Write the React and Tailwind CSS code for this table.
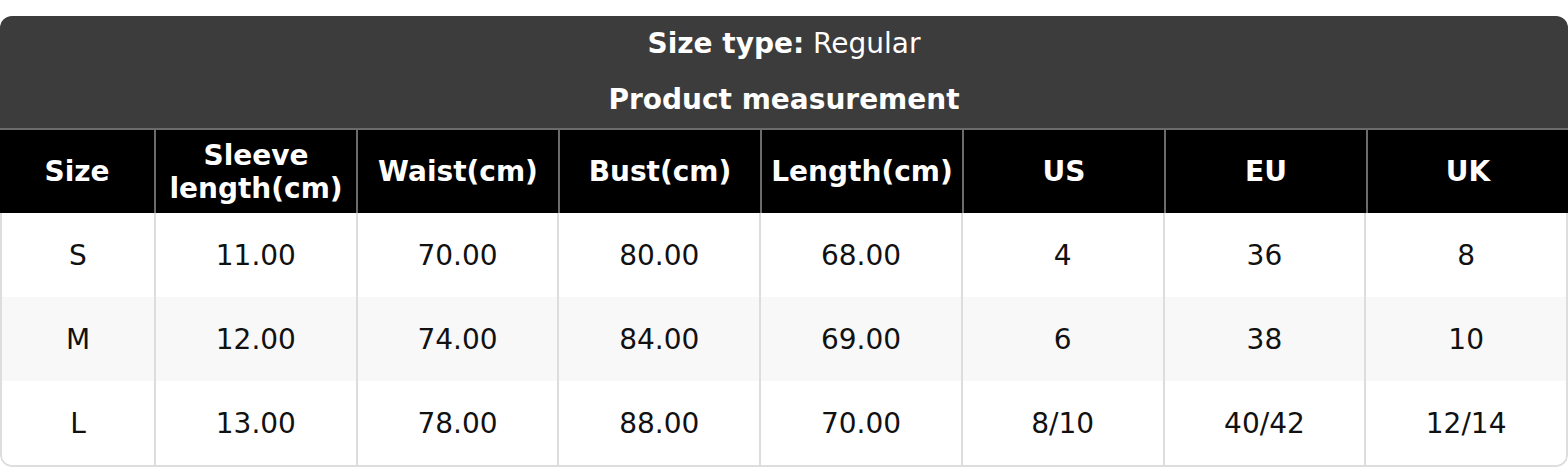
const columns = ["Size", "Sleeve length(cm)", "Waist(cm)", "Bust(cm)", "Length(cm)", "US", "EU", "UK"];

const rows = [
  ["S", "11.00", "70.00", "80.00", "68.00", "4", "36", "8"],
  ["M", "12.00", "74.00", "84.00", "69.00", "6", "38", "10"],
  ["L", "13.00", "78.00", "88.00", "70.00", "8/10", "40/42", "12/14"],
];

export default function App() {
  return (
    <div className="bg-white pt-4 font-['DejaVu_Sans',sans-serif] text-[28px]">
      <div className="rounded-xl overflow-hidden">
        <div className="bg-[#3c3c3c] text-white text-center">
          <div className="py-3 leading-[32px]">
            <span className="font-bold">Size type:</span> Regular
          </div>
          <div className="py-3 leading-[32px] font-bold">Product measurement</div>
        </div>

        <div className="grid grid-cols-[154px_repeat(7,1fr)] bg-black text-white font-bold border-t-2 border-[#6b6b6b]">
          {columns.map((c, i) => (
            <div
              key={c}
              className={`flex items-center justify-center text-center leading-[32.5px] pt-[10px] pb-[8px] ${
                i > 0 ? "border-l-2 border-[#6b6b6b]" : ""
              }`}
            >
              {c === "Sleeve length(cm)" ? (
                <span>
                  Sleeve
                  <br />
                  length(cm)
                </span>
              ) : (
                c
              )}
            </div>
          ))}
        </div>

        <div className="border-x-2 border-b-2 border-[#dddddd] rounded-b-xl overflow-hidden text-[#111]">
          {rows.map((r, ri) => (
            <div
              key={r[0]}
              className={`grid grid-cols-[152px_repeat(7,1fr)] ${ri === 1 ? "bg-[#f8f8f8]" : "bg-white"}`}
            >
              {r.map((v, i) => (
                <div
                  key={i}
                  className={`text-center leading-[32px] pt-[27px] pb-[25px] ${i > 0 ? "border-l-2 border-[#dddddd]" : ""}`}
                >
                  {v}
                </div>
              ))}
            </div>
          ))}
        </div>
      </div>
    </div>
  );
}
